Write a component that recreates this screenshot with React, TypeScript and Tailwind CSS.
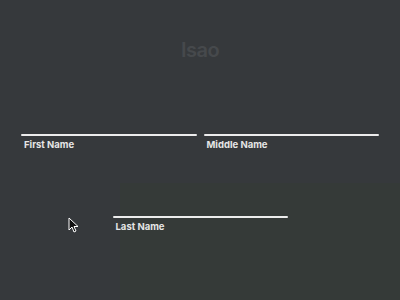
import React from "react";

function Field({ label, className = "" }: { label: string; className?: string }) {
  return (
    <div className={`flex flex-col ${className}`}>
      <div className="h-[2px] w-full bg-[#ececec] rounded-[1px]" />
      <span className="mt-[3px] pl-[3px] text-[9.5px] leading-[12px] font-bold text-[#e6e6e6] [font-family:Inter,'Noto_Sans',sans-serif]">
        {label}
      </span>
    </div>
  );
}

export default function App() {
  return (
    <div className="relative w-[400px] h-[300px] overflow-hidden bg-[#36393c] [font-family:Inter,sans-serif]">
      <div className="absolute left-[120px] top-[183px] right-0 bottom-0 bg-[#353a38]" />
      <div className="relative flex flex-col">
        <div className="pt-[37px] text-center text-[20px] leading-[26px] font-semibold text-[#46494c] tracking-[-0.5px]">
          Isao
        </div>
        <div className="mt-[71px] flex gap-[7px] px-[21px]">
          <Field label="First Name" className="flex-1" />
          <Field label="Middle Name" className="flex-1" />
        </div>
        <div className="mt-[65px] flex justify-center">
          <Field label="Last Name" className="w-[175px]" />
        </div>
      </div>
      <svg className="absolute left-[68px] top-[217px]" width="11" height="17" viewBox="0 0 11 17">
        <path d="M1 1 L1 13 L4 10 L6 15 L8 14 L6 9.5 L10 9.5 Z" fill="#111" stroke="#fff" strokeWidth="1" strokeLinejoin="round" />
      </svg>
    </div>
  );
}
